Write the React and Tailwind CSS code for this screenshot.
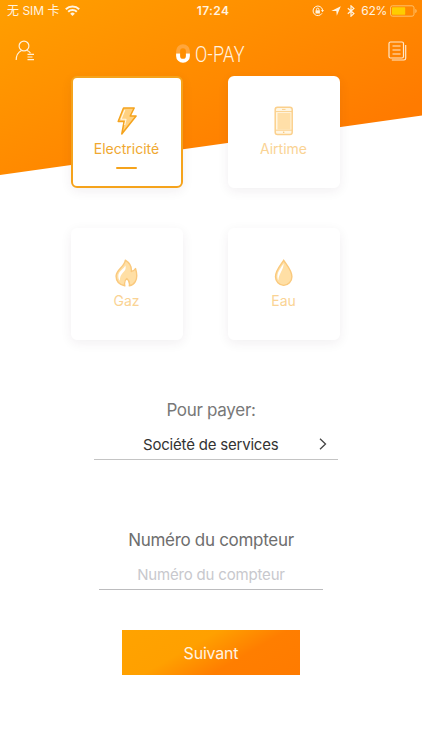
import React from "react";

const UI = "font-['Inter','Noto_Sans_CJK_SC',sans-serif]";

function StatusBar() {
  return (
    <div className="flex h-[22px] items-center text-[12px] leading-[22px] text-[#fff3e0]">
      <div className="flex flex-1 items-center pl-[7px]">
        <span className="whitespace-nowrap">无 SIM 卡</span>
        <svg className="ml-[5px]" width="15" height="12" viewBox="0 0 15 12" fill="none" stroke="currentColor" strokeWidth="2">
          <path d="M.8 4.300a9.600 9.600 0 0 1 13.400 0" />
          <path d="M3.200 6.800a6.200 6.200 0 0 1 8.600 0" />
          <path d="M7.500 11 5.200 8.700a3.300 3.300 0 0 1 4.600 0Z" fill="currentColor" stroke="none" />
        </svg>
      </div>
      <span className="ml-[2px] text-[12px] font-semibold tracking-[0.400px]">17:24</span>
      <div className="flex flex-1 items-center justify-end pr-[5px]">
        <svg width="12" height="12" viewBox="0 0 12 12" fill="none" stroke="currentColor">
          <path d="M10 8.300A4.800 4.800 0 1 1 10.600 5" />
          <path d="M9 5h3l-1.500 2.200Z" fill="currentColor" stroke="none" />
          <rect x="3.500" y="5.300" width="4.400" height="3.200" fill="currentColor" stroke="none" />
          <path d="M4.500 5.500V4.300a1.200 1.200 0 0 1 2.400 0v1.200" />
        </svg>
        <svg className="ml-[7px]" width="10" height="10" viewBox="0 0 10 10" fill="currentColor">
          <path d="M9.800.3 5.800 9.800 5.300 5H.3Z" />
        </svg>
        <svg className="ml-[6px]" width="8" height="12" viewBox="0 0 8 12" fill="none" stroke="currentColor" strokeWidth="1.200">
          <path d="m.8 3.200 6.100 5.400L4 11.200V.8l2.900 2.600L.8 8.800" />
        </svg>
        <span className="ml-[6px] tracking-[-0.300px]">62%</span>
        <svg className="ml-[3px]" width="27" height="12" viewBox="0 0 27 12">
          <rect x=".5" y=".8" width="23.500" height="10.400" rx="2" fill="none" stroke="#ffc069" />
          <rect x="2" y="2.300" width="13.200" height="7.400" rx=".6" fill="#ffcc00" />
          <path d="M25.300 4c1 .4 1.300 1.100 1.300 2s-.3 1.600-1.300 2Z" fill="#ffc069" />
        </svg>
      </div>
    </div>
  );
}

function NavBar() {
  return (
    <div className="flex h-[54px] items-center justify-between pl-[15px] pr-[15px] pt-[3px]">
      <svg width="20" height="21" viewBox="0 0 20 21" fill="none" stroke="#fff0d8" strokeWidth="1.200">
        <circle cx="9" cy="6" r="4.900" />
        <path d="M1.200 20c0-4.500 1.800-7.700 5.300-9.500M11.500 10.300c1.800.6 3.200 1.600 4 3" />
        <path d="M12.500 14.300H19M12.500 17H17.500M12.500 19.700H19" />
      </svg>
      <div className="flex items-center pt-[6px]">
        <svg width="14" height="19" viewBox="0 0 14 19" fill="none" strokeWidth="4">
          <path d="M2.100 9.500V7.100a4.900 4.900 0 0 1 9.800 0V9.500" stroke="#ffa63c" />
          <path d="M2.100 9.500V11.900a4.900 4.900 0 0 0 9.800 0V9.500" stroke="#fff" />
        </svg>
        <span className="ml-[5px] w-[52px] origin-left translate-y-[1px] scale-x-[0.82] whitespace-nowrap font-['Roboto',sans-serif] text-[22px] font-light leading-[22px] tracking-[0.300px] text-[#fff3e0]">
          O-PAY
        </span>
      </div>
      <svg width="19" height="20" viewBox="0 0 19 20" fill="none" stroke="#ffe8cc" strokeWidth="1.200">
        <rect x="1" y="1" width="14.500" height="16" rx="1.500" />
        <path d="M3.800 19H16a1.700 1.700 0 0 0 1.700-1.700V4" />
        <path d="M4.500 5h8M4.500 9h8M4.500 13h8" />
      </svg>
    </div>
  );
}

function Bolt() {
  return (
    <svg width="20" height="28" viewBox="0 0 20 28" strokeLinejoin="round">
      <path d="M6.500 1h10.700l-4 8h5.900L4.800 27l2.300-12.500H1.200Z" fill="#ffd180" stroke="#f5a31c" strokeWidth="1.500" />
      <path d="M7.800 3 4 12.300h5L7.700 18" fill="none" stroke="#fff6e3" strokeWidth="1.100" />
    </svg>
  );
}

function Phone() {
  return (
    <svg width="20" height="30" viewBox="0 0 20 30">
      <rect x="1.200" y="1.200" width="17" height="27.300" rx="2.300" fill="#fff6e3" stroke="#fbd08c" strokeWidth="1.500" />
      <rect x="3.500" y="7" width="13" height="16.500" fill="#ffdfa8" />
      <path d="M1.500 5.600H18M1.500 24.200H18" stroke="#fbd08c" strokeWidth="1" />
      <path d="M8 3.400h3.500" stroke="#fbd08c" />
      <circle cx="9.700" cy="26.300" r=".8" fill="#fbc576" />
    </svg>
  );
}

function Flame() {
  return (
    <svg width="23" height="28" viewBox="0 0 23 28" strokeLinejoin="round">
      <path d="M10.300 1.200c4.800 3 6.500 6.800 6 11.300 2-.3 3.300-1.300 4.200-3 1.600 5.200 2.200 9.200-.2 13.100-1.300 2.200-3.500 3.700-6 4.200.6-3-.3-5.400-2.500-7.300-2 1.700-2.700 4.200-2 7.300C4.400 25.700 1 22 1.100 17 1.200 10.800 9.700 7.500 10.300 1.200Z" fill="#ffdfa5" stroke="#fac97d" strokeWidth="1.400" />
      <path d="M10.300 6.500C9 10 3.300 12 3.300 17c0 2.300.6 3.500 1.700 4.800-.5-6 3.900-8.500 5.200-11 .6-1.300.6-2.800.1-4.300Z" fill="#fff" />
    </svg>
  );
}

function Drop() {
  return (
    <svg width="20" height="28" viewBox="0 0 20 28">
      <path d="M9.700 1.300c3 4.700 8.200 10 8.200 16.400a8.200 8.700 0 0 1-16.400 0c0-6.400 5.200-11.700 8.200-16.400Z" fill="#ffdfa5" stroke="#fac97d" strokeWidth="1.400" />
      <path d="M9.700 4.500C7 8.500 3.400 12.800 3.400 17.500c0 1.800.4 2.800 1 3.800C4.500 15 9.500 11 9.700 4.500Z" fill="#fff" />
    </svg>
  );
}

function Card({ label, icon, active }) {
  return (
    <button
      className={
        "flex h-[112px] w-[112px] flex-col items-center rounded-[6px] border-2 bg-white shadow-[0_3px_12px_rgba(60,30,60,0.07)] " +
        (active ? "border-[#f5a31c] text-[#f0a830]" : "border-white text-[#fad394]")
      }
    >
      <span className="mt-[27px] flex h-[32px] items-center">{icon}</span>
      <span className="mt-[2px] text-[14px] leading-[20px]">{label}</span>
      {active && <span className="mt-[8px] h-[2px] w-[21px] rounded-full bg-[#f5a31c]" />}
    </button>
  );
}

export default function App() {
  return (
    <div className={"h-[750px] w-[422px] overflow-hidden bg-white " + UI}>
      <header className="h-[175px] bg-[linear-gradient(155deg,#ff9f00_0%,#ff8900_50%,#ff7b00_80%)] [clip-path:polygon(0_0,100%_0,100%_115.500px,0_100%)]">
        <StatusBar />
        <NavBar />
      </header>
      <main className="relative -mt-[99px] flex flex-col items-center">
        <div className="ml-[-12px] grid grid-cols-2 gap-x-[45px] gap-y-[39.500px]">
          <Card active label="Electricité" icon={<Bolt />} />
          <Card label="Airtime" icon={<Phone />} />
          <Card label="Gaz" icon={<Flame />} />
          <Card label="Eau" icon={<Drop />} />
        </div>

        <h2 className="mt-[58.500px] text-[17px] leading-[24px] tracking-[-0.300px] text-[#787878]">Pour payer:</h2>
        <div className="ml-[10px] mt-[9px] flex h-[29px] w-[244px] items-start border-b border-[#c4c4c4] pl-[49px]">
          <span className="whitespace-nowrap text-[15px] leading-[28px] tracking-[-0.200px] text-[#333]">Société de services</span>
          <svg className="ml-auto mr-[11px] mt-[7px]" width="8" height="12" viewBox="0 0 8 12" fill="none" stroke="#444" strokeWidth="1.300">
            <path d="m1 .8 5.500 5.200L1 11.200" />
          </svg>
        </div>

        <h2 className="mt-[68px] text-[17px] leading-[24px] tracking-[-0.300px] text-[#6e6e6e]">Numéro du compteur</h2>
        <input
          className="mt-[9px] h-[29px] w-[224px] border-b border-[#bcbcbe] bg-transparent pb-[1px] text-center text-[15px] tracking-[-0.180px] outline-none placeholder:text-[#c8c8cd]"
          placeholder="Numéro du compteur"
        />
        <button className="mt-[40px] h-[45px] w-[178px] bg-[linear-gradient(150deg,#ffa300_0%,#ffa000_38%,#ff7e00_65%,#ff7b00_100%)] text-[16px] tracking-[-0.200px] text-[#fff3e0]">
          Suivant
        </button>
      </main>
    </div>
  );
}
